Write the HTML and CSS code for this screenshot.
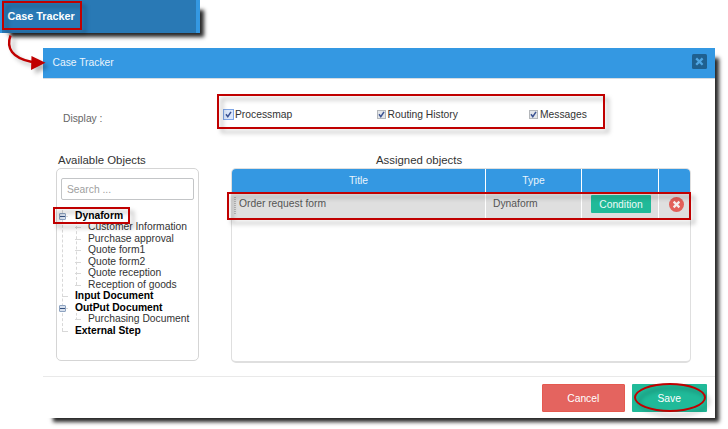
FILE: index.html
```html
<!DOCTYPE html>
<html lang="en">
<head>
<meta charset="utf-8">
<title>Case Tracker</title>
<link rel="stylesheet" href="styles.css">
</head>
<body>
<div class="menu-item"><span>Case Tracker</span></div>

<section class="dialog">
  <header class="dialog-header">
    <span>Case Tracker</span>
    <svg class="close" viewBox="0 0 15 15"><rect width="15" height="15" rx="1.5" fill="#1f608f"/><path d="M4.2 4.4l6.4 6.4M10.6 4.4l-6.4 6.4" stroke="#4fa6e3" stroke-width="2.3"/></svg>
  </header>

  <div class="display-row">
    <span class="display-label">Display :</span>
    <label class="check focused"><svg viewBox="0 0 9 9"><path d="M2 4.2l1.8 2.5L7 1.8"/></svg>Processmap</label>
    <label class="check"><svg viewBox="0 0 9 9"><path d="M2 4.2l1.8 2.5L7 1.8"/></svg>Routing History</label>
    <label class="check"><svg viewBox="0 0 9 9"><path d="M2 4.2l1.8 2.5L7 1.8"/></svg>Messages</label>
  </div>

  <div class="columns">
    <div class="available">
      <h2>Available Objects</h2>
      <div class="panel">
        <div class="search">Search ...</div>
        <ul class="tree">
          <li class="open"><b>Dynaform</b>
            <ul>
              <li>Customer Information</li>
              <li>Purchase approval</li>
              <li>Quote form1</li>
              <li>Quote form2</li>
              <li>Quote reception</li>
              <li>Reception of goods</li>
            </ul>
          </li>
          <li><b>Input Document</b></li>
          <li class="open"><b>OutPut Document</b>
            <ul><li>Purchasing Document</li></ul>
          </li>
          <li><b>External Step</b></li>
        </ul>
      </div>
    </div>
    <div class="assigned">
      <h2>Assigned objects</h2>
      <div class="grid-panel">
        <div class="grid-row head"><div>Title</div><div>Type</div><div></div><div></div></div>
        <div class="grid-row item">
          <div class="name">Order request form</div>
          <div>Dynaform</div>
          <div class="center"><span class="condition">Condition</span></div>
          <div class="center"><svg class="remove" viewBox="0 0 15 15"><circle cx="7.5" cy="7.5" r="7.5" fill="#e3605a"/><path d="M4.6 4.6l5.8 5.8M10.4 4.6l-5.8 5.8" stroke="#f5eeee" stroke-width="2.2"/></svg></div>
        </div>
      </div>
    </div>
  </div>

  <footer class="dialog-footer">
    <span class="button cancel">Cancel</span>
    <span class="button save">Save</span>
  </footer>
</section>

<div class="mark mark-menu"></div>
<div class="mark mark-display"></div>
<div class="mark mark-tree"></div>
<div class="mark mark-row"></div>
<div class="mark mark-save"></div>
<svg class="arrow" viewBox="0 0 60 50"><path d="M10.5 5.5C6 18 12 28 32 32" fill="none" stroke="#c00000" stroke-width="2.4"/><path d="M31.5 26L45.5 32.8L31 40Z" fill="#c00000"/></svg>
</body>
</html>
```
FILE: styles.css
```css
*, *::before, *::after { box-sizing: border-box; }

body {
  margin: 0;
  width: 728px;
  height: 429px;
  overflow: hidden;
  position: relative;
  background: #fff;
  color: #333;
  font: 10.3px/12px "Liberation Sans", Arial, sans-serif;
  white-space: nowrap;
}

.menu-item {
  width: 200px;
  height: 33px;
  padding: 10px 0 0 5.5px;
  background: #2979b5;
  border: solid #3498e2;
  border-width: 0 4px 0 2px;
  box-shadow: 7px 7px 4px -3px rgba(0, 0, 0, .85);
  color: #fff;
  font-weight: bold;
  font-size: 10.8px;
}

.dialog {
  display: flex;
  flex-direction: column;
  width: 672px;
  height: 370px;
  margin: 15px 0 0 43px;
  background: #fff;
  box-shadow: 7px 7px 4px -3px rgba(0, 0, 0, .85);
}

.dialog-header {
  display: flex;
  justify-content: space-between;
  align-items: center;
  height: 31px;
  padding: 1px 8px 1px 9.5px;
  background: #3498e2;
  border-bottom: 1px solid #d5dce2;
  color: #e9f4fc;
}

.close { width: 15px; height: 15px; margin-top: -3px; }

.display-row {
  display: grid;
  grid-template-columns: 161px 152.5px 152.5px 1fr;
  height: 69px;
  padding: 28.5px 0 0 20px;
}

.display-label { padding-top: 5px; color: #666; }

.check { display: flex; align-items: center; height: 12px; gap: 2px; }
.display-row .check { margin-top: 1px; }

.check svg {
  width: 9px;
  height: 9px;
  background: #e3e6ea;
  outline: 1px solid #b4b7bb;
  outline-offset: -1px;
}

.check.focused svg { background: #dbe7fa; outline-color: #7fa6e6; outline-offset: -.5px; }
.check path { fill: none; stroke: #3b5292; stroke-width: 1.5; }

.columns { display: flex; gap: 32px; height: 228px; padding: 4.5px 24px 0 13px; }

h2 { margin: 0; font-size: 11.4px; line-height: 14px; font-weight: normal; }

.available { width: 143px; }
.available h2 { padding-left: 2px; }

.panel {
  height: 193px;
  margin-top: 1.5px;
  padding: 9px 4px 0;
  border: 1px solid #d5d5d5;
  border-radius: 5px;
}

.search {
  height: 22px;
  padding: 5px 5px;
  border: 1px solid #c3c5c7;
  border-radius: 2px;
  color: #a0a0a0;
}

.tree, .tree ul { margin: 0; padding: 0; list-style: none; line-height: 11.45px; }
.tree { margin-top: 10px; padding-left: 14px; position: relative; }
.tree b { color: #000; }
.tree ul { padding-left: 13px; position: relative; }
.tree li { position: relative; }

.tree::before, .tree ul::before {
  content: "";
  position: absolute;
  left: 1px;
  top: 0;
  bottom: 5px;
  border-left: 1px dashed #d8d8d8;
}

.tree li::before {
  content: "";
  position: absolute;
  left: -13px;
  top: 6px;
  width: 6px;
  border-top: 1px dashed #d8d8d8;
}

.tree .open::after {
  content: "";
  position: absolute;
  left: -16px;
  top: 3px;
  width: 7px;
  height: 7px;
  border: 1px solid #8ea3c0;
  border-radius: 1px;
  background: linear-gradient(#35507e, #35507e) 0 2px / 5px 1px no-repeat #d8e1ee;
}

.assigned { width: 460px; }
.assigned h2 { padding-left: 145px; }

.grid-panel {
  height: 195px;
  margin-top: 1.5px;
  overflow: hidden;
  border: solid #dfdfdf;
  border-width: 1px 1px 2px;
  border-radius: 5px;
}

.grid-row { display: grid; grid-template-columns: 253px 95px 76px 32px; gap: 1px; height: 24px; }
.grid-row > div { display: flex; align-items: center; }
.head > div { justify-content: center; background: #3498e2; color: #e9f4fc; }
.item > div { padding: 0 0 4px 7px; background: #dfdfdf; color: #555; }
.item { margin-top: 1px; }
.item > .center { justify-content: center; padding-left: 2px; }
.grid-row > .name { background: repeating-linear-gradient(#b5b5b5 0 1px, #dfdfdf 1px 2px) 2px 3px / 2px 17px no-repeat #dfdfdf; }

.condition {
  width: 60px;
  height: 18px;
  background: #20ba99;
  border-radius: 1px;
  color: #eefbf8;
  line-height: 19px;
  text-align: center;
}

.remove { width: 15px; height: 15px; }

.dialog-footer {
  display: flex;
  justify-content: flex-end;
  gap: 7px;
  height: 42px;
  padding: 7px 8.5px 0 0;
  border-top: 1px solid #e9e9e9;
}

.button {
  width: 83.5px;
  height: 28px;
  border-radius: 1px;
  color: #fff;
  line-height: 29px;
  text-align: center;
}

.cancel { background: #e4645f; border: 1px solid #e5594f; line-height: 27px; }
.save { width: 74.5px; background: #20ba99; }

/* Callout outlines laid over the interface */
.mark {
  position: absolute;
  border: 2px solid #c00000;
  filter: drop-shadow(4px 4px 2px rgba(0, 0, 0, .28));
}

.mark-menu { left: 2px; top: 1px; width: 80px; height: 29px; }
.mark-display { left: 217px; top: 94px; width: 388px; height: 35px; }
.mark-tree { left: 53px; top: 207px; width: 77px; height: 17px; }
.mark-row { left: 227px; top: 192px; width: 464px; height: 28px; }
.mark-save { left: 634px; top: 383px; width: 72px; height: 29px; border-width: 2px; border-radius: 50%; }

.arrow {
  position: absolute;
  left: 0;
  top: 30px;
  width: 60px;
  height: 50px;
  filter: drop-shadow(4px 4px 2px rgba(0, 0, 0, .28));
}
```
